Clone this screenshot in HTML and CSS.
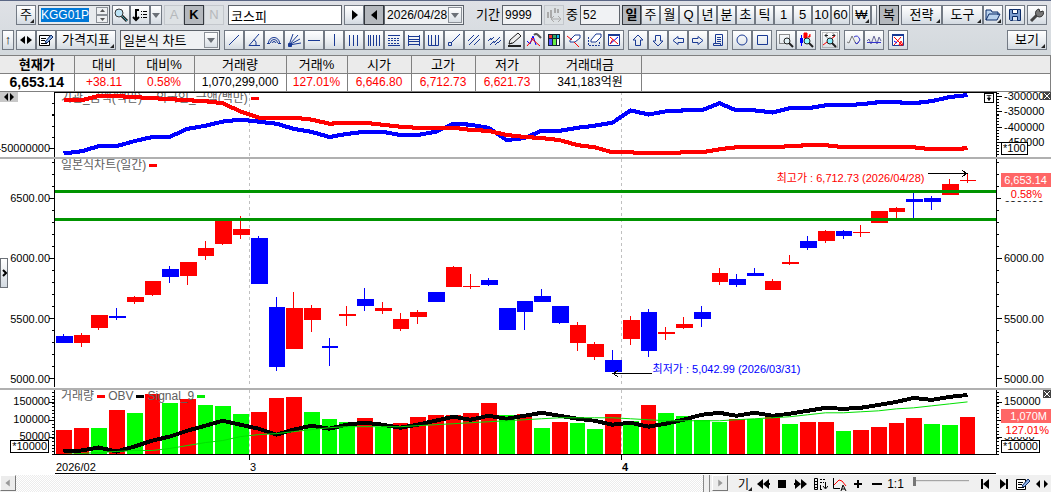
FILE: index.html
```html
<!DOCTYPE html>
<html lang="ko">
<head>
  <meta charset="UTF-8" />
  <meta name="viewport" content="width=device-width, initial-scale=1" />
  <title>코스피 업종 차트</title>
  <link rel="stylesheet" href="styles.css">
</head>
<body>
  <header class="toolbar">
    <div class="row row-main">
      <button class="btn more">주</button>
      <div class="code-box">
        <input type="text" id="code" class="field" aria-label="종목코드" value="KGG01P" />
        <div class="spin">
          <button aria-label="위"><svg viewBox="0 0 9 6"><path d="M2 4h5L4.500 1z" /></svg></button>
          <button aria-label="아래"><svg viewBox="0 0 9 6"><path d="M2 2h5L4.500 5z" /></svg></button>
        </div>
      </div>
      <div class="group">
        <button class="btn w18" aria-label="검색"><svg class="ico" viewBox="0 0 16 16"><circle cx="6" cy="6" r="4" fill="#bde3f5" stroke="#333" /><path d="M9 9l5 5" stroke="#222" stroke-width="3" /><path d="M9 9l5 5" stroke="#3aa0b0" /></svg></button>
        <button class="btn" aria-label="목록"><svg class="ico" viewBox="0 0 16 16"><path d="M7 3H4v10M1 10l3 3 3-3" stroke="#000" stroke-width="2" fill="none" /><path d="M9 4.500h1M11 4.500h4M9 7.500h1M11 7.500h4M9 10.500h1M11 10.500h4" stroke="#000" /></svg></button>
        <button class="btn w12" aria-label="펼치기"><svg class="caret" viewBox="0 0 8 5"><path d="M0 0h8L4 5z" /></svg></button>
      </div>
      <div class="group market">
        <button class="btn off" disabled>A</button>
        <button class="btn on">K</button>
        <button class="btn off" disabled>N</button>
      </div>
      <input type="text" class="field name" aria-label="종목명" value="코스피" />
      <div class="group">
        <button class="btn" aria-label="다음"><svg class="ico" viewBox="0 0 16 16"><path d="M6 3v10l6-5z" /></svg></button>
        <button class="btn on" aria-label="이전"><svg class="ico" viewBox="0 0 16 16"><path d="M11 3v10L5 8z" /></svg></button>
        <div class="select date">
          <select aria-label="일자"><option>2026/04/28</option></select>
          <span class="drop"><svg class="caret" viewBox="0 0 8 5"><path d="M0 0h8L4 5z" /></svg></span>
        </div>
      </div>
      <label class="lead" for="period">기간</label>
      <input type="text" id="period" class="field num" value="9999" />
      <button class="btn off" disabled aria-label="봉 간격"><svg class="ico" viewBox="0 0 16 16"><path d="M2 5v6M5 3v8M9 1v5M12 2v4" stroke="#aaa" stroke-width="2" /><path d="M6 12h9M8 9l-3 3 3 3M12 9l3 3-3 3" stroke="#aaa" fill="none" /></svg></button>
      <label for="count">중</label>
      <input type="text" id="count" class="field num" value="52" />
      <div class="group">
        <button class="btn w19 on heavy">일</button>
        <button class="btn w19">주</button>
        <button class="btn w19">월</button>
        <button class="btn w19">Q</button>
        <button class="btn w19">년</button>
        <button class="btn w19">분</button>
        <button class="btn w19">초</button>
        <button class="btn w19">틱</button>
        <button class="btn w19">1</button>
        <button class="btn w19">5</button>
        <button class="btn w19">10</button>
        <button class="btn w19">60</button>
      </div>
      <div class="group">
        <button class="btn w19 more">₩</button>
        <button class="btn w6" aria-label="통화"></button>
      </div>
      <button class="btn on">복</button>
      <div class="group">
        <button class="btn w41 more">전략</button>
        <button class="btn w41 more">도구</button>
        <button class="btn more" aria-label="열기"><svg class="ico" viewBox="0 0 16 16"><path d="M1 13V3h5l1 2h6v3M1 13l3-6h11l-3 6z" fill="#b9d2ee" stroke="#0b2a66" /></svg></button>
      </div>
      <button class="btn" aria-label="저장"><svg class="ico" viewBox="0 0 16 16"><path d="M2.500 2.500h11v11h-10l-1-1z" fill="#7f9fd0" stroke="#0b2a66" /><path d="M5.500 2.500h5v4h-5z" fill="#fff" stroke="#0b2a66" /><path d="M5.500 13.500v-4h5v4" fill="#dfe8f5" stroke="#0b2a66" /></svg></button>
      <button class="btn" aria-label="설정"><svg class="ico" viewBox="0 0 16 16"><path d="M2 14l7-7" stroke="#444" stroke-width="3" /><path d="M14 4l-3 1-1-3a4 4 0 1 0 4 2z" fill="#777" stroke="#333" /></svg></button>
    </div>

    <div class="row row-tools">
      <button class="btn w12" aria-label="위로">↑</button>
      <div class="group">
        <button class="btn" aria-label="좌우"><svg class="ico" viewBox="0 0 16 16"><path d="M7 4v8L2 8zM9 4v8l5-4z" /></svg></button>
        <button class="btn" aria-label="메모"><svg class="ico" viewBox="0 0 16 16"><path d="M1.500 3.500h10v10h-10z" fill="#fff" stroke="#000" /><path d="M3 6.500h5M3 8.500h4M3 11.500h6" stroke="#000" /><path d="M7 10l6-7 2 2-6 6z" fill="#8fb3e8" stroke="#0b2a66" /></svg></button>
        <button class="btn w60 more">가격지표</button>
      </div>
      <div class="select style">
        <select aria-label="차트 유형"><option>일본식 차트</option></select>
        <span class="drop"><svg class="caret" viewBox="0 0 8 5"><path d="M0 0h8L4 5z" /></svg></span>
      </div>
      <div class="group draw">
        <button class="btn" aria-label="추세선"><svg class="ico" viewBox="0 0 16 16"><path d="M3 13L13 3" /></svg></button>
        <button class="btn" aria-label="각도선"><svg class="ico" viewBox="0 0 16 16"><path d="M13 2L3 13.500h11M8 7.500q3 2 2 6" /></svg></button>
        <button class="btn" aria-label="원호"><svg class="ico" viewBox="0 0 16 16"><path d="M2.500 11a5.500 5.500 0 0 1 11 0M4.500 11a3.500 3.500 0 0 1 7 0M6.500 11a1.500 1.500 0 0 1 3 0M1 11.500h3M12 11.500h3" /></svg></button>
        <button class="btn" aria-label="부채꼴"><svg class="ico" viewBox="0 0 16 16"><path d="M3 13L7 2M3 13L12 3M3 13l11-6M3 13l12-2" /><path d="M2.500 11.500h3v3h-3z" fill="#1a3a94" /></svg></button>
        <button class="btn" aria-label="수평선"><svg class="ico" viewBox="0 0 16 16"><path d="M2 8.500h12" /></svg></button>
        <button class="btn" aria-label="수직선"><svg class="ico" viewBox="0 0 16 16"><path d="M8.500 2v12" /></svg></button>
        <button class="btn" aria-label="삼등분선"><svg class="ico" viewBox="0 0 16 16"><path d="M3.500 3v11M7.500 3v11M11.500 3v11" /></svg></button>
        <button class="btn" aria-label="피보나치 시간대"><svg class="ico" viewBox="0 0 16 16"><path d="M2.500 3v11M4.500 3v11M7.500 3v11M10.500 3v11M13.500 3v11" /></svg></button>
        <button class="btn" aria-label="피보나치 조정대"><svg class="ico" viewBox="0 0 16 16"><path d="M2 3.500h12M2 13.500h12" /><path d="M2 6.500h12M2 8.500h12M2 11.500h12" stroke-dasharray="2 1" /></svg></button>
        <button class="btn" aria-label="등분선"><svg class="ico" viewBox="0 0 16 16"><path d="M2.500 3v11M13.500 3v11M3 4.500h10M3 7.500h10M3 9.500h10M3 12.500h10" /></svg></button>
        <button class="btn" aria-label="사이클"><svg class="ico" viewBox="0 0 16 16"><path d="M2.500 3v10.500h10V3M5.500 3v10M9.500 3v10" /></svg></button>
        <button class="btn" aria-label="반직선"><svg class="ico" viewBox="0 0 16 16"><path d="M5 11l9-9M2.500 10.500h3v3h-3z" /></svg></button>
        <button class="btn" aria-label="평행선"><svg class="ico" viewBox="0 0 16 16"><path d="M2 9l6-6M3 13L13 3M8 13l6-6" /></svg></button>
        <button class="btn" aria-label="채널"><svg class="ico" viewBox="0 0 16 16"><path d="M2 9l3-3v2l3-3M4 13l4-4v2l6-6M9 13l3-3v1l3-3" /></svg></button>
        <button class="btn" aria-label="연필"><svg class="ico k" viewBox="0 0 16 16"><path d="M3 12l1-4 8-7 3 3-8 7zM3 12l3-1" fill="#eee" /><path d="M2 14h13" stroke-width="2" /></svg></button>
        <button class="btn" aria-label="선 설정"><svg class="ico" viewBox="0 0 16 16"><path d="M1 9l3 3 3-8 3 9" stroke="#00f" /><path d="M1 14L8 6M5 6l9 8" stroke="red" /><path d="M8 3q2-2 4 0l3 3" stroke="#555" stroke-width="2" /></svg></button>
        <button class="btn" aria-label="색상"><svg class="ico n" viewBox="0 0 16 16"><path fill="#123" d="M2 2h12v12H2z" /><path fill="#e33" d="M3 3h3v3H3z" /><path fill="#3a6" d="M7 3h3v3H7z" /><path fill="#1be" d="M11 3h2v3h-2z" /><path fill="#55f" d="M3 7h3v6H3z" /><path fill="#6e4" d="M7 7h3v6H7z" /><path fill="#fff" d="M11 7h2v6h-2z" /></svg></button>
        <button class="btn" aria-label="지우개"><svg class="ico" viewBox="0 0 16 16"><path d="M4 8l5-5h5v3l-5 4H4z" fill="#fff" /><path d="M1 4l5 4M8 10l5 5" stroke="red" /></svg></button>
        <button class="btn" aria-label="전체 지우개"><svg class="ico" viewBox="0 0 16 16"><path d="M5 8l5-6h5v3l-5 5H5z" fill="#fff" /><path d="M2.500 5v8.500h11V10" stroke-dasharray="2 1" /></svg></button>
        <button class="btn" aria-label="차트 초기화"><svg class="ico" viewBox="0 0 16 16"><path d="M2.500 2.500h11v11h-11z" fill="#fff" /><path d="M2 3h12" stroke-width="2" /><path d="M4 12l8-7" stroke="#00f" /><path d="M4 5l8 7M4 12l3-5" stroke="red" /></svg></button>
      </div>
      <div class="group draw">
        <button class="btn" aria-label="위 화살표"><svg class="ico" viewBox="0 0 16 16"><path d="M8 3l5 5h-2.500v5.500h-5V8H3z" /></svg></button>
        <button class="btn" aria-label="아래 화살표"><svg class="ico" viewBox="0 0 16 16"><path d="M8 14L3 9h2.500V3.500h5V9H13z" /></svg></button>
        <button class="btn" aria-label="왼쪽 화살표"><svg class="ico" viewBox="0 0 16 16"><path d="M3 8.500l5-4v2h5.500v4H8v2z" /></svg></button>
        <button class="btn" aria-label="오른쪽 화살표"><svg class="ico" viewBox="0 0 16 16"><path d="M13 8.500l-5-4v2H2.500v4H8v2z" /></svg></button>
        <button class="btn" aria-label="텍스트"><svg class="ico" viewBox="0 0 16 16"><path d="M5.500 11V2.500h7v11h-9v-2h7v2M7 5.500h4M7 7.500h4M7 9.500h4" /></svg></button>
      </div>
      <div class="group draw">
        <button class="btn" aria-label="원"><svg class="ico" viewBox="0 0 16 16"><circle cx="8" cy="8" r="5" /></svg></button>
        <button class="btn" aria-label="사각형"><svg class="ico" viewBox="0 0 16 16"><path d="M3.500 3.500h10v9h-10z" /></svg></button>
      </div>
      <div class="group draw">
        <button class="btn" aria-label="영역 확대"><svg class="ico k" viewBox="0 0 16 16"><path d="M1.500 2.500h10v9h-10z" stroke-dasharray="1 1" /><circle cx="9" cy="9" r="3" fill="#e0f0f5" /><path d="M11 11l4 4" stroke-width="2" /></svg></button>
        <button class="btn" aria-label="봉 확대"><svg class="ico k" viewBox="0 0 16 16"><path d="M3.500 3v11" stroke="#00f" /><path d="M2 6h3v5H2z" fill="#00f" stroke="none" /><path d="M6 1h3v5H6zM12 2v3h-2" fill="red" stroke="red" /><circle cx="9" cy="9" r="3" fill="#9ff" /><path d="M11 11l4 4" stroke-width="2" /></svg></button>
      </div>
      <div class="group draw">
        <button class="btn" aria-label="자동 맞춤"><svg class="ico k" viewBox="0 0 16 16"><path d="M0.500 0.500h15v15h-15z" stroke="#888" stroke-dasharray="1 1" /><path d="M3 3.500h3M10 3.500h3M5 1.500l-2 2 2 2M11 1.500l2 2-2 2" /><path d="M1 13l4-3 8-6" stroke="red" /><circle cx="8" cy="9" r="3" fill="#8ef" /><path d="M10 11l4 4" stroke-width="2" /></svg></button>
      </div>
      <div class="group draw">
        <button class="btn" aria-label="패턴 찾기"><svg class="ico" viewBox="0 0 16 16"><path d="M1 10l2 1 3-7 4 8 3-2" stroke="#777" /><path d="M8 5q4-3 6 3l-3 4-2-2" stroke="#33c" /></svg></button>
        <button class="btn" aria-label="파동"><svg class="ico" viewBox="0 0 16 16"><path d="M1 9l2-2 2 5 3-8 3 8 2-7 2 4" stroke="#669" /><path d="M1 10.500h14" stroke="#33c" /></svg></button>
      </div>
      <div class="group draw">
        <button class="btn" aria-label="차트 저장"><svg class="ico" viewBox="0 0 16 16"><path d="M2.500 2.500h11v11h-11z" fill="#fff" /><path d="M2 3h12" stroke-width="2" /><path d="M4 5l8 8M4 13l7-8M9 13l2-4 2 4z" stroke="red" /><path d="M4 9l3 2" stroke="#00f" /></svg></button>
      </div>
      <button class="btn w40 more view">보기</button>
    </div>
  </header>

  <table class="quote">
    <colgroup>
      <col class="c74"><col class="c60"><col class="c60"><col class="c92"><col class="c61"><col class="c64"><col class="c64"><col class="c64"><col class="c102"><col>
    </colgroup>
    <thead>
      <tr><th class="now">현재가</th><th>대비</th><th>대비%</th><th>거래량</th><th>거래%</th><th>시가</th><th>고가</th><th>저가</th><th>거래대금</th><th></th></tr>
    </thead>
    <tbody>
      <tr><td class="now">6,653.14</td><td class="up">+38.11</td><td class="up">0.58%</td><td>1,070,299,000</td><td class="up">127.01%</td><td class="up">6,646.80</td><td class="up">6,712.73</td><td class="up">6,621.73</td><td>341,183억원</td><td></td></tr>
    </tbody>
  </table>

  <main class="chart">
    <section class="pane flow" id="flow">
      <div class="axis left"></div>
      <div class="plot">
        <div class="legend">
          <span>기관_금액(백만)</span><i class="dash blue"></i>
          <span>외국인_금액(백만)</span><i class="dash red"></i>
        </div>
        <button class="save" aria-label="내려받기"><svg viewBox="0 0 10 10"><path d="M2 2h6M5 2v6M3 5l2 3 2-3z" stroke="#000" /></svg></button>
      </div>
      <div class="axis right"><span class="unit">*100</span></div>
      <button class="fold" aria-label="좌우"><svg viewBox="0 0 18 10"><path d="M8 1v8L4 5zM10 1v8l4-4z" /></svg></button>
      <button class="close" aria-label="닫기"><svg viewBox="0 0 8 8"><path d="M1 1l6 6M7 1L1 7" /></svg></button>
    </section>

    <section class="pane price" id="price">
      <div class="axis left"></div>
      <div class="plot">
        <div class="legend"><span>일본식차트(일간)</span><i class="dash red"></i></div>
        <span class="note high">최고가 : 6,712.73 (2026/04/28)</span>
        <span class="note low">최저가 : 5,042.99 (2026/03/31)</span>
      </div>
      <div class="axis right">
        <div class="tag now-tag"><b>6,653.14</b><em>0.58%</em></div>
      </div>
      <button class="expand" aria-label="펼치기"><svg viewBox="0 0 6 10"><path d="M2 2l3 3-3 3" fill="none" stroke="#000" stroke-width="2" /></svg></button>
    </section>

    <section class="pane volume" id="volume">
      <div class="axis left"><span class="unit">*10000</span></div>
      <div class="plot">
        <div class="legend"><span>거래량</span><i class="dash red"></i><span>OBV</span><i class="dash black"></i><span>Signal_9</span><i class="dash green"></i></div>
      </div>
      <div class="axis right">
        <div class="tag vol-tag"><b>1,070M</b><em>127.01%</em></div>
        <span class="unit">*10000</span>
      </div>
      <button class="close" aria-label="닫기"><svg viewBox="0 0 8 8"><path d="M1 1l6 6M7 1L1 7" /></svg></button>
    </section>

    <div class="time">
      <div class="months" id="months"></div>
    </div>
  </main>

  <footer class="bottom">
    <button class="scroll" aria-label="왼쪽으로"><svg viewBox="0 0 16 16"><path d="M10 4v8L5 8z" /></svg></button>
    <div class="track"></div>
    <div class="grip"></div>
    <button class="scroll" aria-label="오른쪽으로"><svg viewBox="0 0 16 16"><path d="M6 4v8l5-4z" /></svg></button>
    <div class="controls">
      <button class="more">기</button>
      <button aria-label="빠르게 뒤로"><svg class="ico" viewBox="0 0 16 16"><path d="M8 3v10L2 8zM14 3v4h1v2h-1v4L8 8z" /></svg></button>
      <button aria-label="정지"><svg class="ico" viewBox="0 0 16 16"><path d="M4 4h8v8H4z" /></svg></button>
      <button aria-label="빠르게 앞으로"><svg class="ico" viewBox="0 0 16 16"><path d="M8 3v10l6-5zM2 3v4H1v2h1v4l6-5z" /></svg></button>
      <button aria-label="간격"><svg class="ico line" viewBox="0 0 16 16"><path d="M2.500 2.500h3v11h-3zM2 5.500h4M2 8.500h4M2 11.500h4" /><path d="M8 3.500h6M8 6.500h4M8 13.500h3" stroke-dasharray="2 1" /><path d="M13.500 6v6M11 10l2.500 3 2.500-3M8.500 9v4" /></svg></button>
      <button aria-label="자동 크기"><svg class="ico line" viewBox="0 0 16 16"><path d="M2.500 2v10.500H9" /><path d="M3 9l5-5 3 1 4 5" stroke="red" /><path d="M10 15l2-6 3 6M11 13h3" /></svg></button>
      <button aria-label="확대"><svg class="ico" viewBox="0 0 16 16"><path d="M7 4h2v3h3v2H9v3H7V9H4V7h3z" /></svg></button>
      <button aria-label="축소"><svg class="ico" viewBox="0 0 16 16"><path d="M3 7h10v2H3z" /></svg></button>
      <button>1:1</button>
    </div>
    <input type="range" class="zoom" aria-label="확대 비율" min="0" max="100" value="0" />
    <div class="controls ends">
      <button aria-label="처음"><svg class="ico" viewBox="0 0 16 16"><path d="M4 3h2v10H4zM12 3v10L6 8z" /></svg></button>
      <button aria-label="끝"><svg class="ico" viewBox="0 0 16 16"><path d="M10 3h2v10h-2zM4 3v10l6-5z" /></svg></button>
      <button aria-label="메모"><svg class="ico line" viewBox="0 0 16 16"><path d="M1.500 3.500h9v10h-9z" fill="#fff" /><path d="M3 6.500h5M3 8.500h4M3 11.500h6" /><path d="M7 10l6-7 2 2-6 6z" fill="#8fb3e8" stroke="#0b2a66" /></svg></button>
      <button aria-label="좌우"><svg class="ico" viewBox="0 0 16 16"><path d="M6 4v8L2 8zM10 4v8l4-4z" /></svg></button>
    </div>
  </footer>

  <script src="chart.js"></script>
</body>
</html>
```

FILE: styles.css
```css
* {
  box-sizing: border-box;
}

body {
  margin: 0;
  min-height: 100vh;
  display: flex;
  flex-direction: column;
  background-color: #fff;
  color: #000;
  font-family: "Liberation Sans", "Noto Sans CJK KR", sans-serif;
  font-size: 12px;
  overflow-x: hidden;
}

button, input, select {
  font-family: inherit;
  font-size: 13px;
  color: #000;
  margin: 0;
  padding: 0;
  border-radius: 0;
}

/* toolbar */
.toolbar {
  border-top: 1px solid #5b6785;
  padding: 4px 4px 5px 2px;
  display: flex;
  flex-direction: column;
  gap: 5px;
  background: linear-gradient(#dfe1e6, #d3d9dd);
}

.row {
  display: flex;
  align-items: center;
  height: 20px;
  gap: 2px;
}

.row-main {
  padding-left: 14px;
}

.row-tools {
  gap: 4px;
}

.row-tools > .btn:first-child {
  margin-right: -2px;
}

.row label {
  font-size: 13px;
  line-height: 20px;
  white-space: nowrap;
}

.row .lead {
  margin-left: 10px;
}

.group {
  display: flex;
  flex-shrink: 0;
}

.btn {
  position: relative;
  flex-shrink: 0;
  width: 20px;
  height: 20px;
  border: 1px solid #737a84;
  background: linear-gradient(#fff, #e8ecf0 60%, #d3dae1);
  display: flex;
  align-items: center;
  justify-content: center;
  line-height: 16px;
  white-space: nowrap;
}

.btn.on {
  background: #b4b8bd;
  border-color: #33383e;
}

.btn.off {
  background: #dde1e4;
  border-color: #c3c7cc;
  color: #b5b8bb;
}

.btn.heavy, .market .on {
  font-weight: bold;
}

.more {
  position: relative;
}

.more::after {
  content: "";
  position: absolute;
  right: 1px;
  bottom: 1px;
  border: 2px solid #222;
  border-top-color: transparent;
  border-left-color: transparent;
}

.w6 { width: 6px; }
.w12 { width: 12px; }
.w18 { width: 18px; }
.w19 { width: 19px; }
.w40 { width: 40px; }
.w41 { width: 41px; }
.w60 { width: 60px; }

.view {
  margin-left: auto;
}

.ico {
  width: 16px;
  height: 16px;
  flex-shrink: 0;
  fill: #000;
}

.draw .ico {
  fill: none;
  stroke: #1a3a94;
}

.draw .ico.k {
  stroke: #222;
}

.draw .ico.n {
  stroke: none;
}

.caret {
  width: 8px;
  height: 5px;
  fill: #6b7077;
}

.field {
  height: 20px;
  border: 1px solid #5d636b;
  background-color: #fff;
  padding: 0 2px;
}

.code-box {
  position: relative;
  width: 72px;
  height: 20px;
}

.code-box .field {
  width: 100%;
  background-color: #e8ebee;
  font-size: 12px;
  outline: none;
}

.code-box .field::selection {
  background-color: #0078d7;
  color: #fff;
}

.spin {
  position: absolute;
  right: 2px;
  top: 2px;
  display: flex;
  flex-direction: column;
}

.spin button {
  width: 12px;
  height: 8px;
  border: 1px solid #8b9097;
  background-color: #eef0f2;
  display: flex;
  align-items: center;
  justify-content: center;
}

.spin svg {
  width: 9px;
  height: 6px;
  fill: #555;
}

.name {
  flex: 1;
  min-width: 60px;
  margin-left: 2px;
}

.num {
  width: 40px;
  background-color: #f0f2f4;
  font-size: 12px;
}

.select {
  position: relative;
  height: 20px;
  flex-shrink: 0;
}

.select select {
  appearance: none;
  width: 100%;
  height: 20px;
  border: 1px solid #5d636b;
  background-color: #eff1f3;
  padding: 0 2px;
}

.drop {
  position: absolute;
  right: 2px;
  top: 2px;
  width: 14px;
  height: 16px;
  border: 1px solid #8b9097;
  background: linear-gradient(#fff, #d9dfe5);
  display: flex;
  align-items: center;
  justify-content: center;
  pointer-events: none;
}

.date {
  width: 80px;
}

.date select {
  font-size: 12px;
}

.style {
  width: 100px;
}

/* quote table */
.quote {
  width: 100%;
  table-layout: fixed;
  border-collapse: collapse;
  background-color: #fff;
}

.quote th, .quote td {
  height: 18px;
  padding: 0;
  border: 1px solid #808080;
  text-align: center;
  line-height: 17px;
  white-space: nowrap;
}

.quote th {
  background-color: #ebebeb;
  font-weight: normal;
  font-size: 13px;
}

.quote th:first-child, .quote td:first-child {
  border-left: 0;
}

.quote .now {
  font-weight: bold;
}

.quote td.now {
  font-size: 14px;
}

.up {
  color: #f00;
}

.c60 { width: 60px; }
.c61 { width: 61px; }
.c64 { width: 64px; }
.c74 { width: 74px; }
.c92 { width: 92px; }
.c102 { width: 102px; }

/* chart */
.chart {
  flex: 1;
  display: flex;
  flex-direction: column;
  min-height: 300px;
  font-size: 11px;
}

.pane {
  position: relative;
  display: grid;
  grid-template-columns: 55px minmax(0, 1fr) 55px;
  border-bottom: 2px solid #b0b0b0;
}

.flow {
  flex: 66 1 0;
}

.price {
  flex: 230 1 0;
}

.volume {
  flex: 66 1 0;
  border-bottom: 0;
}

.plot, .axis {
  position: relative;
  overflow: hidden;
}

.plot > svg, .axis > svg {
  position: absolute;
  inset: 0;
  width: 100%;
  height: 100%;
}

.legend {
  position: relative;
  display: flex;
  align-items: center;
  gap: 3px;
  padding-left: 6px;
  height: 13px;
  font-size: 12px;
  line-height: 13px;
  color: #606060;
  white-space: nowrap;
}

.flow .legend {
  position: static;
}

.volume .legend {
  z-index: 1;
}

.dash {
  width: 8px;
  height: 3px;
}

.dash.red { background-color: #f00; }
.dash.blue { background-color: #00f; }
.dash.black { background-color: #000; }
.dash.green { background-color: #0e0; }

.tick {
  position: absolute;
  line-height: 12px;
  transform: translateY(-50%);
}

.left .tick {
  right: 5px;
}

.right .tick {
  left: 8px;
}

.unit {
  position: absolute;
  z-index: 2;
  bottom: 2px;
  height: 13px;
  line-height: 11px;
  border: 1px solid #000;
  background-color: #fff;
  padding: 0 1px;
}

.left .unit {
  right: 6px;
}

.right .unit {
  left: 5px;
}

.tag {
  position: absolute;
  z-index: 1;
  left: 5px;
  right: 0;
  text-align: right;
}

.tag b, .tag em {
  display: block;
  font-weight: normal;
  font-style: normal;
  line-height: 14px;
  padding-right: 4px;
}

.tag b {
  background-color: #f66;
  color: #fff;
}

.tag em {
  background-color: #fff;
  color: #f00;
}

.now-tag {
  top: 6%;
}

.now-tag em {
  padding-right: 9px;
}

.vol-tag {
  top: 30%;
}

.vol-tag em {
  padding-right: 2px;
}

.note {
  position: absolute;
  line-height: 14px;
  white-space: nowrap;
}

.high {
  right: 7.6%;
  top: 5%;
  color: #f00;
}

.low {
  left: 63.5%;
  top: 89%;
  color: #00f;
}

.save {
  position: absolute;
  right: 2px;
  top: 1px;
  width: 10px;
  height: 10px;
  border: 1px solid #000;
  background-color: #fff;
}

.save svg, .close svg, .fold svg, .expand svg {
  display: block;
  width: 100%;
  height: 100%;
}

.fold {
  position: absolute;
  left: 0;
  top: 0;
  width: 18px;
  height: 10px;
  border: 0;
  background-color: #c8c8c8;
}

.close {
  position: absolute;
  z-index: 2;
  right: 0;
  top: 0;
  width: 8px;
  height: 8px;
  border: 0;
  background-color: #444;
}

.close svg {
  stroke: #fff;
}

.expand {
  position: absolute;
  left: 0;
  top: 43%;
  width: 8px;
  height: 30px;
  border: 1px solid #6c7178;
  background: linear-gradient(#fff, #d3dae1);
}

.time {
  height: 20px;
  padding: 0 55px;
}

.months {
  position: relative;
  height: 19px;
  border-bottom: 1px solid #000;
}

.month {
  position: absolute;
  top: 0;
  padding: 6px 0 0 1px;
  line-height: 12px;
}

.month.mark::before {
  content: "";
  position: absolute;
  left: 0;
  top: 0;
  height: 5px;
  border-left: 1px solid #000;
}

.month.mark:last-child {
  font-weight: bold;
}

/* bottom bar */
.bottom {
  display: flex;
  height: 17px;
  background-color: #f0f0f0;
}

.scroll {
  width: 16px;
  height: 16px;
  border: 1px solid #fff;
  border-right-color: #777;
  border-bottom-color: #777;
  background-color: #ececec;
}

.scroll svg {
  display: block;
  width: 14px;
  height: 14px;
  fill: #999;
}

.track {
  flex: 1;
  background: repeating-conic-gradient(#fff 0 25%, #ececec 0 50%) 0 0 / 2px 2px;
}

.grip {
  width: 7px;
  margin-right: 2px;
  border-left: 1px solid #888;
  border-right: 1px solid #888;
}

.controls {
  display: flex;
  padding-left: 6px;
}

.controls button {
  width: 19px;
  height: 17px;
  border: 0;
  background: none;
  display: flex;
  align-items: center;
  justify-content: center;
  font-size: 12px;
}

.ico.line {
  fill: none;
  stroke: #000;
}

.zoom {
  appearance: none;
  width: 56px;
  height: 12px;
  margin-left: 8px;
  background: linear-gradient(#888, #fff) 0 5px / 100% 2px no-repeat;
}

.zoom::-webkit-slider-thumb {
  appearance: none;
  width: 3px;
  height: 9px;
  background-color: #777;
}
```

FILE: chart.js
```javascript
const SVG = "http://www.w3.org/2000/svg";
const LEFT = 55, RIGHT = 996, WIDTH = RIGHT - LEFT, STEP = 17.72;
const RED = "#f00", BLUE = "#00f", GREEN = "#0f0";

// color, high, body top, body bottom, low
const candles = [
  "b 334 336 343 343", "r 333 335 343 347", "r 315 315 328 330", "b 308 316 318 320",
  "r 296 297 302 304", "r 281 281 295 296", "b 266 269 277 283", "r 262 262 276 285",
  "r 241 248 256 260", "r 219 219 244 245", "r 216 229 235 239", "b 236 238 284 284",
  "b 297 307 367 371", "r 292 308 349 349", "r 305 308 320 332", "b 338 346 348 366",
  "r 306 314 316 326", "b 288 299 306 311", "r 302 308 311 314", "r 313 319 329 331",
  "r 310 312 317 324", "b 292 292 302 302", "r 266 267 287 287", "r 274 286 287 289",
  "b 278 280 285 286", "b 308 308 330 330", "b 301 301 312 330", "b 289 296 302 302",
  "b 306 306 323 324", "r 322 325 343 351", "r 342 344 357 360", "b 350 360 372 372",
  "r 316 320 339 345", "b 309 312 351 357", "r 327 332 334 340", "r 317 324 328 329",
  "b 306 312 319 327", "r 268 273 282 285", "b 274 279 285 287", "b 268 273 276 276",
  "r 279 281 290 290", "r 255 262 264 265", "b 236 241 248 250", "r 230 231 241 243",
  "b 230 231 236 239", "r 225 232 233 237", "r 211 211 223 223", "r 207 208 212 218",
  "b 193 199 202 218", "b 196 198 202 210", "r 179 184 195 195", "r 173 180 181 183"
];

const volumes = [
  "r429", "r427", "g427", "r409", "g412", "r393", "g402", "r398", "g404", "g405", "g413", "r411", "r397",
  "r396", "g411", "g418", "g421", "r417", "g426", "r422", "r416", "r414", "r414", "r412", "r402", "g414",
  "r413", "g427", "r421", "g422", "g428", "r413", "g420", "r404", "g412", "g415", "g419", "g421", "r418",
  "g418", "r416", "g423", "r421", "r421", "g430", "r429", "r426", "r422", "r417", "g423", "g424", "r416"
];

const obv = [451, 450, 447, 451, 446, 440, 436, 430, 425, 420, 424, 428, 434, 429, 425, 428, 424, 422, 424, 427, 424, 420, 416, 419, 415, 418, 415, 412, 415, 418, 420, 424, 422, 426, 423, 419, 414, 412, 415, 412, 415, 413, 410, 407, 408, 407, 404, 401, 397, 399, 396, 394];
const signal = [454, 453, 452, 451, 450, 450, 448, 445, 442, 440, 436, 434, 433, 431, 429, 427, 426, 426, 426, 426, 425, 424, 423, 422, 421, 420, 419, 418, 417, 417, 417, 417, 418, 419, 420, 420, 420, 420, 419, 418, 417, 416, 414, 412, 412, 411, 410, 408, 407, 405, 403, 401];
const inst = [101, 101, 97, 97, 98, 99, 100, 101, 102, 104, 112, 118, 118, 118, 120, 124, 123, 123, 125, 127, 128, 128, 128, 130, 131, 135, 137, 138, 140, 145, 147, 152, 152, 153, 153, 152, 152, 149, 147, 147, 147, 146, 145, 145, 147, 147, 147, 147, 147, 149, 149, 148];
const foreign = [153, 151, 146, 146, 141, 137, 137, 129, 126, 122, 120, 122, 124, 129, 132, 137, 134, 132, 132, 135, 135, 132, 124, 125, 128, 140, 138, 131, 131, 128, 126, 123, 111, 115, 112, 111, 111, 104, 111, 111, 113, 109, 109, 106, 106, 105, 103, 103, 104, 102, 98, 96];

const panes = {
  flow: { top: 93, height: 64 },
  price: { top: 159, height: 228 },
  volume: { top: 389, height: 66 }
};

function shape(svg, name, attrs) {
  const el = document.createElementNS(SVG, name);
  for (const key in attrs) el.setAttribute(key, attrs[key]);
  svg.appendChild(el);
  return el;
}

function rect(svg, x, y, width, height, fill) {
  shape(svg, "rect", { x, y, width, height, fill });
}

function addSvg(id, selector, x, width) {
  const { top, height } = panes[id];
  const svg = document.createElementNS(SVG, "svg");
  svg.setAttribute("viewBox", `${x} ${top} ${width} ${height}`);
  svg.setAttribute("preserveAspectRatio", "none");
  svg.setAttribute("shape-rendering", "crispEdges");
  document.querySelector(`#${id} ${selector}`).appendChild(svg);
  return svg;
}

function startX(i) {
  return Math.round(55.9 + STEP * i);
}

function bodyWidth(i, gap) {
  return startX(i + 1) - startX(i) - gap;
}

function series(svg, values, color, width) {
  const points = values.map((y, i) => `${startX(i) + 7.5},${y}`).join(" ");
  shape(svg, "polyline", { points, fill: "none", stroke: color, "stroke-width": width });
}

function plot(id) {
  const svg = addSvg(id, ".plot", LEFT, WIDTH);
  const { top, height } = panes[id];
  [249.5, 621.5].forEach(x => {
    shape(svg, "path", { d: `M${x} ${top}v${height}`, stroke: "#c0c0c0", "stroke-dasharray": "3 3" });
  });
  return svg;
}

// labels: [[y, text], ...], minor ticks every step between from and to
function axis(id, side, labels, from, to, step) {
  const isLeft = side === "left";
  const svg = addSvg(id, "." + side, isLeft ? 0 : RIGHT, 55);
  const { top, height } = panes[id];
  rect(svg, isLeft ? 54 : 996, top, 1, height, "#000");
  for (let y = from; y <= to; y += step) {
    rect(svg, isLeft ? 52 : 997, Math.round(y), 2, 1, "#000");
  }
  labels.forEach(([y, text]) => {
    rect(svg, isLeft ? 49 : 997, y, 5, 1, "#000");
    const span = document.createElement("span");
    span.className = "tick";
    span.textContent = text;
    span.style.top = (y - top) / height * 100 + "%";
    svg.parentNode.appendChild(span);
  });
}

const flow = plot("flow");
rect(flow, LEFT, 93, WIDTH, 1, "#000");
series(flow, foreign, BLUE, 4);
series(flow, inst, RED, 4);

const price = plot("price");
candles.forEach((row, i) => {
  const [c, ...v] = row.split(" ");
  const [high, top, bottom, low] = v.map(Number);
  const color = c === "r" ? RED : BLUE;
  rect(price, startX(i) + 7, high, 1, low - high, color);
  rect(price, startX(i), top, bodyWidth(i, 1), bottom - top, color);
});
rect(price, LEFT, 190, WIDTH, 3, "#009400");
rect(price, LEFT, 218, WIDTH, 3, "#009400");
shape(price, "path", { d: "M928 173.5h39M962 170.5l5 3-5 3M652 373.5h-39M618 370.5l-5 3 5 3", fill: "none", stroke: "#000" });

const volume = plot("volume");
volumes.forEach((v, i) => {
  const y = Number(v.slice(1));
  rect(volume, startX(i), y, bodyWidth(i, 2), 454 - y, v[0] === "r" ? RED : GREEN);
});
series(volume, obv, "#000", 4);
series(volume, signal, "#00e000", 1);
rect(volume, LEFT, 454, WIDTH, 1, "#000");

const prices = [[198, "6500.00"], [258, "6000.00"], [318, "5500.00"], [378, "5000.00"]];
const amounts = [[401, "150000"], [419, "100000"], [436, "50000"]];
axis("flow", "left", [[148, "-50000000"]], 104, 148, 11);
axis("flow", "right", [[97, "-300000"], [112, "-350000"], [127, "-400000"], [142, "-450000"]], 94, 156, 3);
axis("price", "left", prices, 162, 378, 12);
axis("price", "right", prices, 162, 378, 12);
axis("volume", "left", amounts, 391, 454, 3.5);
axis("volume", "right", amounts, 391, 454, 3.5);

[[55, "2026/02"], [249, "3"], [621, "4"]].forEach(([x, text], i) => {
  const span = document.createElement("span");
  span.className = i ? "month mark" : "month";
  span.textContent = text;
  span.style.left = (x - LEFT) / WIDTH * 100 + "%";
  document.getElementById("months").appendChild(span);
});

// the code box is ready for typing over
const code = document.getElementById("code");
code.focus();
code.select();
```
